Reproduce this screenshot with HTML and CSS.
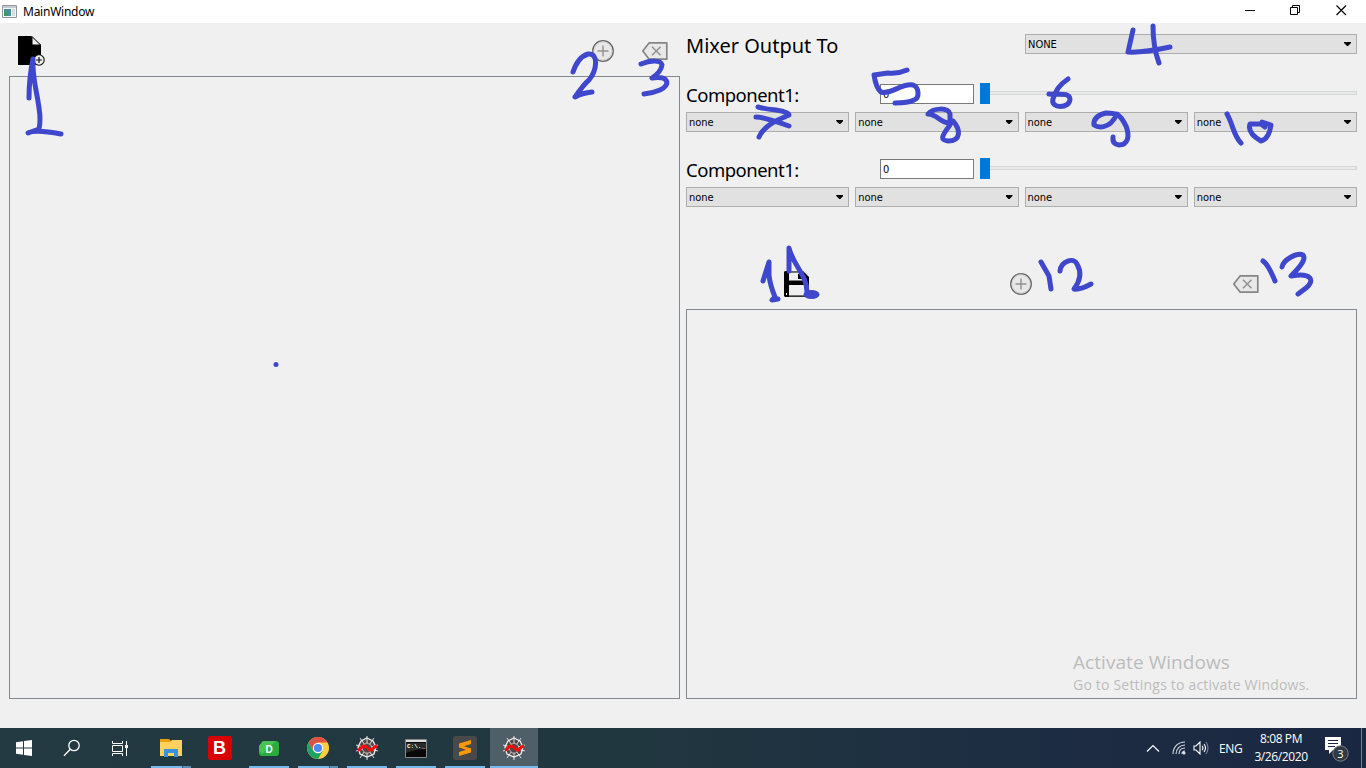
FILE: index.html
```html
<!DOCTYPE html>
<html lang="en">
<head>
<meta charset="utf-8">
<title>MainWindow</title>
<link rel="stylesheet" href="styles.css">
</head>
<body>
<svg class="defs" width="0" height="0">
  <defs>
    <symbol id="add" viewBox="0 0 24 24"><circle cx="12" cy="12" r="10.3" fill="#e8e8e8" stroke="#686868" stroke-width="1.3"/><circle cx="12" cy="12" r="9" fill="none" stroke="#c4c4c4" stroke-width=".6"/><path d="M12 6.5v11M6.5 12h11" stroke="#929292" stroke-width="1.4"/></symbol>
    <symbol id="erase" viewBox="0 0 28 20"><path d="M8.2 1.8H25.8V18.2H8.2L1.8 10Z" fill="#e8e8e8" stroke="#858585" stroke-width="1.7" stroke-linejoin="round"/><path d="M11 5.7l8.5 8.6M19.500 5.700l-8.500 8.600" stroke="#929292" stroke-width="1.5"/></symbol>
    <symbol id="spider" viewBox="0 0 24 24"><path d="M12 2L18 5L21 11L19 18L12 21L5 18L3 11L6 5Z" fill="#504747" stroke="#eee" stroke-width="1.300"/><path d="M12 0L12 24M1 9L23 15M1 15L23 9M5 2L19 22M19 2L5 22" fill="none" stroke="#eee" stroke-width=".9"/><path d="M12 7L16 9L17 13L14 17H10L7 13L8 9Z" fill="#504747" stroke="#ddd" stroke-width=".7"/><path d="M3 14C6 14 6 10 9 10C13 10 13 15 16 14C18 13.500 18 11 22 10" fill="none" stroke="#fa0a0a" stroke-width="3"/></symbol>
  </defs>
</svg>
<div class="window">
  <header class="titlebar">
    <svg class="app-icon" width="16" height="14" viewBox="0 0 16 14"><path d="M.5.500h14v12H.5z" fill="#f5f5f5" stroke="#91979c"/><path d="M1 1h13v2H1z" fill="#c4cbd0"/><path d="M2 4h7v7H2z" fill="#498d9b"/><path d="M2 7h4v4H2z" fill="#3c9863"/><path d="M10 4h3v7h-3z" fill="#d8dcdf"/></svg>
    <span class="title">MainWindow</span>
    <div class="controls">
      <svg width="46" height="23"><path d="M18 10.500h10" stroke="#000"/></svg>
      <svg width="46" height="23"><path d="M17.500 7.500h7v7h-7zM19.500 7V5.500h7v7H25" fill="none" stroke="#000"/></svg>
      <svg width="46" height="23"><path d="M17.500 5.500l9.500 9.500M27 5.500L17.500 15" stroke="#000" stroke-width="1.150"/></svg>
    </div>
  </header>
  <main class="content">
    <section class="left">
      <div class="left-tools">
        <svg class="file-icon" width="28" height="32" viewBox="0 0 28 32"><path d="M1 1H14L24 10V30H1Z"/><path d="M15 1.500V10H23.500Z" fill="#efefef" stroke="#000"/><circle cx="22" cy="25" r="5.200" fill="#efefef" stroke="#111" stroke-width="1.100"/><path d="M22 22v6M19 25h6" stroke="#111" stroke-width="1.200"/></svg>
        <svg class="add-icon" width="24" height="24"><use href="#add"/></svg>
        <svg width="28" height="20"><use href="#erase"/></svg>
      </div>
      <div class="panel"></div>
    </section>
    <section class="right">
      <div class="output-row"><div class="heading">Mixer Output To</div><div class="select">NONE</div></div>
      <div class="component">
        <div class="level"><div class="label">Component1:</div><div class="number">0</div><div class="slider"><div class="thumb"></div><div class="track"></div></div></div>
        <div class="choices"><div class="select">none</div><div class="select">none</div><div class="select">none</div><div class="select">none</div></div>
      </div>
      <div class="component">
        <div class="level"><div class="label">Component1:</div><div class="number">0</div><div class="slider"><div class="thumb"></div><div class="track"></div></div></div>
        <div class="choices"><div class="select">none</div><div class="select">none</div><div class="select">none</div><div class="select">none</div></div>
      </div>
      <div class="right-tools">
        <svg class="save-icon" width="28" height="28" viewBox="0 0 28 28"><path d="M2 1H20L26 7V27H2L1 26V2Z"/><path d="M6 2.500h14v8H6zM6 15h16v10.500H6z" fill="#efefef"/><path d="M6 1.500h14M6 26h16" stroke="#686868"/><path d="M15 4h4v5h-4z"/><path d="M3 23h1v2H3z" fill="#fff"/></svg>
        <svg width="24" height="24"><use href="#add"/></svg>
        <svg class="erase-icon" width="28" height="20"><use href="#erase"/></svg>
      </div>
      <div class="panel preview"><div class="activate"><div class="activate-title">Activate Windows</div><div class="activate-text">Go to Settings to activate Windows.</div></div></div>
    </section>
  </main>
  <footer class="taskbar">
    <div class="system">
      <div class="task"><svg width="16" height="16" viewBox="0 0 16 16" fill="#fff"><path d="M0 2.300L7 1.300V7.500H0zM8 1.100L16 0V7.500H8zM0 8.500h7v6.200L0 13.700zM8 8.500h8V16l-8-1.100z"/></svg></div>
      <div class="task"><svg width="18" height="18" viewBox="0 0 18 18" fill="none" stroke="#fff" stroke-width="1.300"><circle cx="11" cy="6.500" r="5.200"/><path d="M7.300 10.200L1 16.800"/></svg></div>
      <div class="task"><svg width="18" height="17" viewBox="0 0 18 17" fill="none" stroke="#fff"><path d="M1.500 1v2.500h10V1M1.500 16v-2.500h10V16M1.500 5.500h10v6h-10zM15.500 1v15"/><path d="M14 5h3v3h-3z" fill="#fff" stroke="none"/></svg></div>
    </div>
    <div class="apps">
      <div class="task running grouped"><svg width="22" height="20" viewBox="0 0 22 20"><path d="M0 1h9l2 2v3H0z" fill="#e8a20b"/><path d="M0 4h10l2-2h10v16H0z" fill="#ffd260"/><path d="M4 11h14v8h-4v-4H8v4H4z" fill="#3b92dc"/></svg></div>
      <div class="task"><div class="bitdefender">B</div></div>
      <div class="task running"><svg width="20" height="17" viewBox="0 0 20 17"><path d="M4 1h13q3 0 3 3v9q0 3-3 3H3q-3 0-3-3V6z" fill="#2bad3e"/><path d="M4 1h13L3 14 0 11V6z" fill="#46c453"/><text x="10" y="12.500" text-anchor="middle" class="dash-label">D</text></svg></div>
      <div class="task running grouped"><svg width="22" height="22" viewBox="0 0 22 22"><circle cx="11" cy="11" r="11" fill="#ffcd40"/><path d="M1.500 5.500A11 11 0 0 1 20.500 5.500H11L6.200 13.700Z" fill="#dd5144"/><path d="M1.500 5.500A11 11 0 0 0 11 22L15.800 13.700 6.200 13.700Z" fill="#1ca463"/><circle cx="11" cy="11" r="5.200" fill="#fff"/><circle cx="11" cy="11" r="4.100" fill="#4b8af4"/></svg></div>
      <div class="task running"><svg width="24" height="24"><use href="#spider"/></svg></div>
      <div class="task running"><svg width="22" height="19" viewBox="0 0 22 19"><path d="M.5.500h21v18H.5z" fill="#080808" stroke="#888"/><path d="M1 1h20v2H1z" fill="#ddd"/><path d="M1 4h20v6q-10 0-20 4z" fill="#292b2c"/><text x="2" y="9" class="cmd-label">C:\._</text></svg></div>
      <div class="task running"><svg width="24" height="24" viewBox="0 0 24 24"><rect width="24" height="24" rx="2" fill="#494949"/><path d="M6 7.500L18 4V8L11 10.300 18 12.500V16.500L6 20V16L13 13.800 6 11.500Z" fill="#ff9800"/></svg></div>
      <div class="task running active"><svg width="24" height="24"><use href="#spider"/></svg></div>
    </div>
    <div class="tray">
      <svg class="chevron" width="14" height="9" viewBox="0 0 14 9"><path d="M1 7.500l6-6 6 6" fill="none" stroke="#fff" stroke-width="1.200"/></svg>
      <svg class="wifi" width="14" height="14" viewBox="0 0 14 14" fill="none" stroke="#dde1e8" stroke-width="1.100"><path d="M1 13C1 6 6 1 13 1M4 13C4 8 8 4 13 4M7 13Q7 7 13 7M10 13Q10 10 13 10"/><circle cx="12" cy="12" r="1" fill="#fff"/></svg>
      <svg class="sound" width="17" height="14" viewBox="0 0 17 14" fill="none" stroke="#fff" stroke-width="1.100"><path d="M1 5h2l4-4v12L3 9H1zM9 5q2 2 0 4M11 3q3 4 0 8"/><path d="M13 1q4 6 0 12" stroke="#7b8497"/></svg>
      <span class="language">ENG</span>
      <div class="clock"><div>8:08 PM</div><div>3/26/2020</div></div>
      <svg class="notice" width="26" height="26" viewBox="0 0 26 26"><path d="M1 1h16v13H9l-4 4v-4H1z" fill="#fff"/><path d="M4 4.500h10M4 7.500h10M4 10.500h7" stroke="#1a2742"/><circle cx="16.500" cy="17.500" r="7.700" fill="#333942" stroke="#77808d"/><text x="16.500" y="21.500" text-anchor="middle" class="badge-label">3</text></svg>
      <div class="desktop-edge"></div>
    </div>
  </footer>
  <svg class="ink" width="1366" height="728" viewBox="0 0 1366 728">
    <path d="M29 98Q29 78 33 59C32 78 37 91 39 108Q41 120 39 129L28 133Q35 129 61 134"/>
    <path d="M573 72Q578 57 588 54C599 53 597 70 589 80Q584 84 575 97Q582 93 592 92"/>
    <path d="M641 64C651 60 661 60 662 65Q661 72 652 78C669 75 671 85 660 90Q653 93 644 94"/>
    <path d="M1133 30L1128 52Q1142 53 1170 47M1153 26Q1153 47 1159 63"/>
    <path d="M907 70Q898 74 888 73L874 75Q876 88 881 92C891 95 901 83 913 85C919 87 920 98 914 100Q908 103 895 103"/>
    <path d="M1068 79Q1056 87 1053 99C1050 109 1070 109 1070 99C1069 92 1059 95 1049 94"/>
    <path d="M758 107Q765 109 776 110Q789 112 789 115C780 119 765 124 759 137M756 117Q764 117 789 126"/>
    <path d="M928 114C933 108 948 107 950 114V125C940 138 941 140 948 141C961 141 961 130 953 121L949 123C939 122 937 114 928 114Z"/>
    <path d="M1117 114C1109 131 1097 127 1094 125Q1093 116 1106 113C1120 113 1121 117 1126 126C1130 136 1128 145 1119 145Q1112 144 1113 137"/>
    <path d="M1227 114C1233 124 1233 135 1241 143M1265 127L1261 124H1250Q1247 133 1261 141Q1269 139 1271 125L1262 122"/>
    <path d="M763 281L769 262V275Q770 285 775 297L772 300 778 299M789 271V248C793 265 807 275 807 292"/>
    <ellipse cx="811.5" cy="294.500" rx="8" ry="4.500" class="ink-dot"/>
    <path d="M1041 262L1049 276 1051 289M1060 271C1061 261 1074 257 1077 264Q1084 276 1074 289Q1080 290 1091 284"/>
    <path d="M1263 261Q1268 264 1275 281M1282 267C1283 260 1297 252 1303 255C1307 260 1297 270 1291 276C1312 272 1315 281 1306 288L1298 294"/>
    <circle cx="276" cy="364.500" r="2.500" class="ink-dot"/>
  </svg>
</div>
</body>
</html>
```
FILE: styles.css
```css
* { box-sizing: border-box; }
body { margin: 0; overflow: hidden; font-family: "DejaVu Sans Condensed", "DejaVu Sans", sans-serif; font-stretch: condensed; color: #000; }
svg { display: block; flex: none; }
.defs { position: absolute; }
.window { position: relative; width: 1366px; height: 768px; display: flex; flex-direction: column; background: #f0f0f0; }
.titlebar { height: 23px; display: flex; align-items: center; background: #fff; padding-left: 2px; }
.title { margin-left: 5px; font: 12px "Noto Sans", sans-serif; letter-spacing: -.25px; }
.controls { margin-left: auto; display: flex; padding-right: 1px; }
.content { height: 705px; padding: 11px 9px 29px; display: grid; grid-template-columns: 671px 671px; gap: 6px; }
.left { display: flex; flex-direction: column; }
.left-tools { height: 42px; padding: 0 11px 8px 8px; display: flex; align-items: center; }
.add-icon { margin-left: auto; margin-right: 26px; }
.panel { flex: 1; border: 1px solid #828790; }
.right { display: flex; flex-direction: column; }
.output-row { display: grid; grid-template-columns: 333px 332px; gap: 6px; height: 49px; align-items: start; }
.heading { font-family: "Noto Sans", sans-serif; font-size: 20px; line-height: 23px; white-space: nowrap; }
.label { width: 194px; font-family: "Noto Sans", sans-serif; font-size: 18.5px; letter-spacing: -.5px; line-height: 22px; padding-top: 1px; }
.select { height: 20px; border: 1px solid #adadad; background: #e1e1e1; padding: 1px 5px 0 2px; display: flex; align-items: center; justify-content: space-between; font-size: 11px; line-height: 17px; }
.select::after { content: ""; width: 7px; height: 4px; margin-top: -1px; background: #000; clip-path: polygon(0 0, 100% 0, 100% 25%, 57% 100%, 43% 100%, 0 25%); }
.component { height: 75px; }
.level { height: 29px; display: flex; align-items: flex-start; }
.number { margin-top: 1px; width: 94px; height: 20px; border: 1px solid #7a7a7a; background: #fff; font-size: 11px; line-height: 18px; padding: 1px 0 0 2px; }
.slider { display: flex; align-items: flex-start; flex: 1; padding-left: 6px; }
.thumb { width: 10px; height: 21px; background: #0078d7; }
.track { flex: 1; height: 4px; margin-top: 8px; border: 1px solid #d6d6d6; border-left: 0; background: #e7eaea; }
.choices { display: grid; grid-template-columns: repeat(4, 1fr); gap: 6px; }
.right-tools { height: 76px; display: grid; grid-template-columns: repeat(3, 1fr); justify-items: center; align-items: center; padding-top: 25px; }
.save-icon { margin-right: 1px; }
.erase-icon { margin-left: 2px; }
.preview { display: flex; align-items: flex-end; justify-content: flex-end; padding: 0 47px 3px 0; }
.activate { width: 236px; color: #bcbcbc; font-family: "Open Sans", "Noto Sans", sans-serif; font-stretch: normal; }
.activate-title { font-size: 19px; line-height: 24px; padding-top: 1px; letter-spacing: .06px; white-space: nowrap; }
.activate-text { font-size: 14px; line-height: 21px; letter-spacing: .2px; white-space: nowrap; }
.taskbar { height: 40px; display: flex; background: linear-gradient(90deg, #233a43 0%, #21373f 45%, #1d2d42 75%, #1a2742 100%); color: #fff; }
.system { display: flex; width: 147px; }
.task { width: 49px; height: 40px; display: flex; align-items: center; justify-content: center; }
.system .task { width: 48px; }
.apps { display: flex; }
.apps .task { padding-right: 2px; }
.running { background: linear-gradient(#76b9ed, #76b9ed) 4px 38px / 40px 2px no-repeat; }
.grouped { background: linear-gradient(90deg, #76b9ed 0 31px, #375b72 31px 32px, #5b8db5 32px) 4px 38px / 40px 2px no-repeat; }
.apps .active { padding-right: 0; width: 48px; background: linear-gradient(#76b9ed, #76b9ed) 0 38px / 100% 2px no-repeat, #4f5f67; }
.bitdefender { width: 24px; height: 24px; border-radius: 2px; background: #d90000; font: bold 18px/24px "Liberation Sans", sans-serif; text-align: center; }
.dash-label { font: bold 10px "Liberation Sans", sans-serif; fill: #fff; }
.cmd-label { font: bold 6px "Liberation Mono", monospace; fill: #fff; }
.badge-label { font: 11px "Open Sans", sans-serif; fill: #fff; }
.tray { margin-left: auto; display: flex; align-items: center; font: 12px "Open Sans", "Noto Sans", sans-serif; }
.wifi { margin-left: 12px; }
.sound { margin-left: 7px; }
.language { width: 24px; margin-left: 9px; letter-spacing: -.4px; }
.clock { width: 54px; margin-left: 11px; text-align: center; line-height: 18px; letter-spacing: -.4px; white-space: nowrap; }
.notice { margin-left: 16px; margin-top: 2px; }
.desktop-edge { width: 5px; height: 40px; margin-left: 11px; border-left: 1px solid #77808f; }
.ink { position: absolute; inset: 0; pointer-events: none; fill: none; stroke: #3f48cc; stroke-width: 5px; stroke-linecap: round; stroke-linejoin: round; }
.ink-dot { fill: #3f48cc; stroke: none; }
```
